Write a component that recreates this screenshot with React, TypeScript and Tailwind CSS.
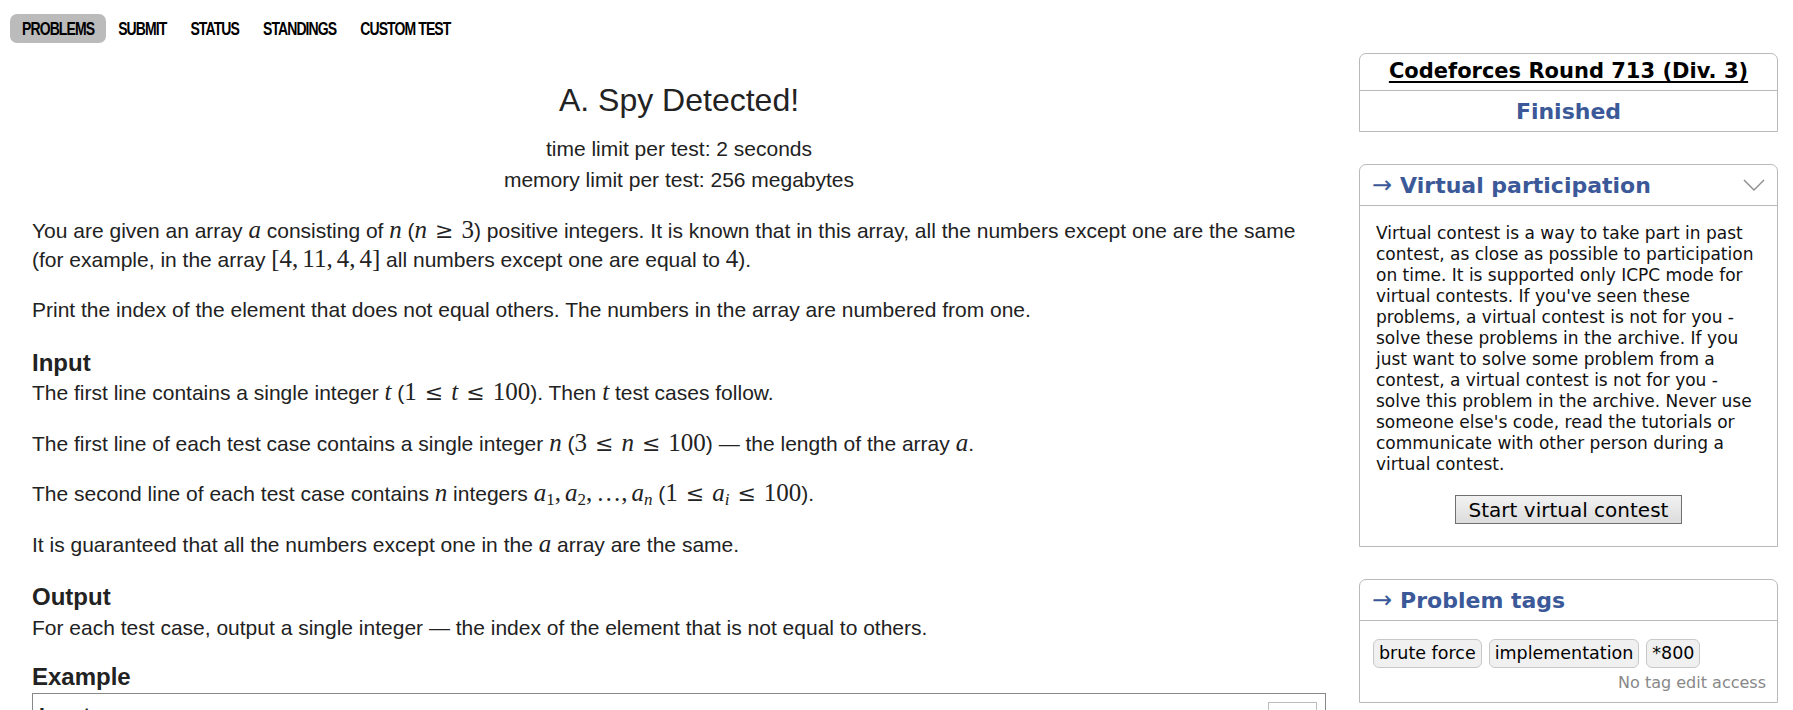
import React from "react";

const V = ({ children }: { children: React.ReactNode }) => (
  <span className="font-['Liberation_Serif',serif] italic text-[25px] leading-none">{children}</span>
);

const N = ({ children }: { children: React.ReactNode }) => (
  <span className="font-['Liberation_Serif',serif] text-[25px] leading-none">{children}</span>
);

const Rel = ({ children }: { children: React.ReactNode }) => (
  <span className="font-['DejaVu_Serif',serif] text-[22px] leading-none mx-[8px]">{children}</span>
);

const Comma = () => <span className="font-['Liberation_Serif',serif] text-[25px] leading-none mr-[4px]">,</span>;

function Nav() {
  const items = ["PROBLEMS", "SUBMIT", "STATUS", "STANDINGS", "CUSTOM TEST"];
  return (
    <div className="flex items-center pt-[14px] pl-[10px]">
      {items.map((it, i) => (
        <a
          key={it}
          className={
            "h-[29px] px-3 flex items-center rounded-[7px] font-['Liberation_Sans',Arial,sans-serif] font-bold text-[14px] tracking-[-0.9px] text-black " +
            (i === 0 ? "bg-[#bbbbbb]" : "")
          }
        >
          <span className="inline-block scale-y-[1.25] translate-y-[1px]">{it}</span>
        </a>
      ))}
    </div>
  );
}

function Statement() {
  return (
    <div className="flex-1 ml-[32px] pt-[37px] font-['Liberation_Sans',Arial,sans-serif] text-[21px] text-[#222]">
      <div className="text-center">
        <div className="text-[32px] leading-[40px]">A. Spy Detected!</div>
        <div className="mt-[13px] leading-[31px]">time limit per test: 2 seconds</div>
        <div className="leading-[31px]">memory limit per test: 256 megabytes</div>
      </div>

      <div className="mt-[22px] leading-[28.5px]">
        <p>
          You are given an array <V>a</V> consisting of <V>n</V> (<V>n</V>
          <Rel>≥</Rel>
          <N>3</N>) positive integers. It is known that in this array, all the numbers except one are the same
          <br />
          (for example, in the array{" "}
          <N>
            [4<Comma />11<Comma />4<Comma />4]
          </N>{" "}
          all numbers except one are equal to <N>4</N>).
        </p>
        <p className="mt-[22px]">
          Print the index of the element that does not equal others. The numbers in the array are numbered from one.
        </p>

        <div className="mt-[22px] font-bold text-[24px] leading-[32.5px]">Input</div>
        <p>
          The first line contains a single integer <V>t</V> (<N>1</N>
          <Rel>≤</Rel>
          <V>t</V>
          <Rel>≤</Rel>
          <N>100</N>). Then <V>t</V> test cases follow.
        </p>
        <p className="mt-[22px]">
          The first line of each test case contains a single integer <V>n</V> (<N>3</N>
          <Rel>≤</Rel>
          <V>n</V>
          <Rel>≤</Rel>
          <N>100</N>) — the length of the array <V>a</V>.
        </p>
        <p className="mt-[22px]">
          The second line of each test case contains <V>n</V> integers{" "}
          <V>
            a<sub className="not-italic text-[17px]">1</sub>
          </V>
          <Comma />
          <V>
            a<sub className="not-italic text-[17px]">2</sub>
          </V>
          <Comma />
          <N>…</N>
          <Comma />
          <V>
            a<sub className="text-[17px]">n</sub>
          </V>{" "}
          (<N>1</N>
          <Rel>≤</Rel>
          <V>
            a<sub className="text-[17px]">i</sub>
          </V>
          <Rel>≤</Rel>
          <N>100</N>).
        </p>
        <p className="mt-[22px]">
          It is guaranteed that all the numbers except one in the <V>a</V> array are the same.
        </p>

        <div className="mt-[22px] font-bold text-[24px] leading-[32.5px]">Output</div>
        <p>For each test case, output a single integer — the index of the element that is not equal to others.</p>

        <div className="mt-[19px] font-bold text-[24px] leading-[32px]">Example</div>
        <div className="border border-[#888] h-[80px]">
          <div className="flex justify-between items-start pl-[6px] pr-[8px] pt-[7px]">
            <span className="font-bold text-[21px]">Input</span>
            <span className="w-[49px] h-[26px] border border-[#bbb] mt-[1px]"></span>
          </div>
        </div>
      </div>
    </div>
  );
}

function BoxHeader({ title, chevron }: { title: string; chevron?: boolean }) {
  return (
    <div className="h-[41px] flex items-center px-[12px] border-b border-[#b9b9b9] text-[#3b5998]">
      <span className="text-[24px] leading-none mr-[8px]">→</span>
      <span className="font-bold text-[22px]">{title}</span>
      {chevron && (
        <svg className="ml-auto" width="22" height="13" viewBox="0 0 22 13">
          <polyline points="1,1 11,11 21,1" fill="none" stroke="#8c8c8c" strokeWidth="1.4" />
        </svg>
      )}
    </div>
  );
}

function Sidebar() {
  const lines = [
    "Virtual contest is a way to take part in past",
    "contest, as close as possible to participation",
    "on time. It is supported only ICPC mode for",
    "virtual contests. If you've seen these",
    "problems, a virtual contest is not for you -",
    "solve these problems in the archive. If you",
    "just want to solve some problem from a",
    "contest, a virtual contest is not for you -",
    "solve this problem in the archive. Never use",
    "someone else's code, read the tutorials or",
    "communicate with other person during a",
    "virtual contest.",
  ];
  return (
    <div className="w-[419px] ml-[33px] mr-[15px] pt-[10px] font-['DejaVu_Sans',Verdana,sans-serif]">
      <div className="border border-[#b9b9b9] rounded-t-[7px]">
        <div className="h-[37px] flex items-center justify-center border-b border-[#b9b9b9]">
          <a className="font-bold text-[21px] text-black underline underline-offset-[3px]">Codeforces Round 713 (Div. 3)</a>
        </div>
        <div className="h-[40px] flex items-center justify-center font-bold text-[22px] text-[#3b5998]">Finished</div>
      </div>

      <div className="mt-[32px] border border-[#b9b9b9] rounded-t-[7px]">
        <BoxHeader title="Virtual participation" chevron />
        <div className="pt-[17px] pb-[22px] px-[16px]">
          <div className="text-[17px] leading-[21px] text-[#111]">
            {lines.map((l) => (
              <div key={l} className="whitespace-nowrap">
                {l}
              </div>
            ))}
          </div>
          <div className="flex justify-center mt-[20px]">
            <button className="w-[227px] h-[29px] border border-[#707070] bg-gradient-to-b from-[#f2f2f2] to-[#dcdcdc] text-[20px] text-black leading-none">
              Start virtual contest
            </button>
          </div>
        </div>
      </div>

      <div className="mt-[32px] border border-[#b9b9b9] rounded-t-[7px]">
        <BoxHeader title="Problem tags" />
        <div className="pt-[18px] pb-[10px] pl-[13px] pr-[11px]">
          <div className="flex gap-[7px]">
            {["brute force", "implementation", "*800"].map((t) => (
              <span
                key={t}
                className="h-[29px] px-[5px] flex items-center rounded-[6px] border border-[#c8c8c8] bg-[#f0f0f0] text-[17.5px] text-black"
              >
                {t}
              </span>
            ))}
          </div>
          <div className="text-right text-[16px] leading-[18px] text-[#888] mt-[6px]">No tag edit access</div>
        </div>
      </div>
    </div>
  );
}

export default function App() {
  return (
    <div className="w-[1793px] h-[710px] overflow-hidden bg-white">
      <Nav />
      <div className="flex">
        <Statement />
        <Sidebar />
      </div>
    </div>
  );
}
